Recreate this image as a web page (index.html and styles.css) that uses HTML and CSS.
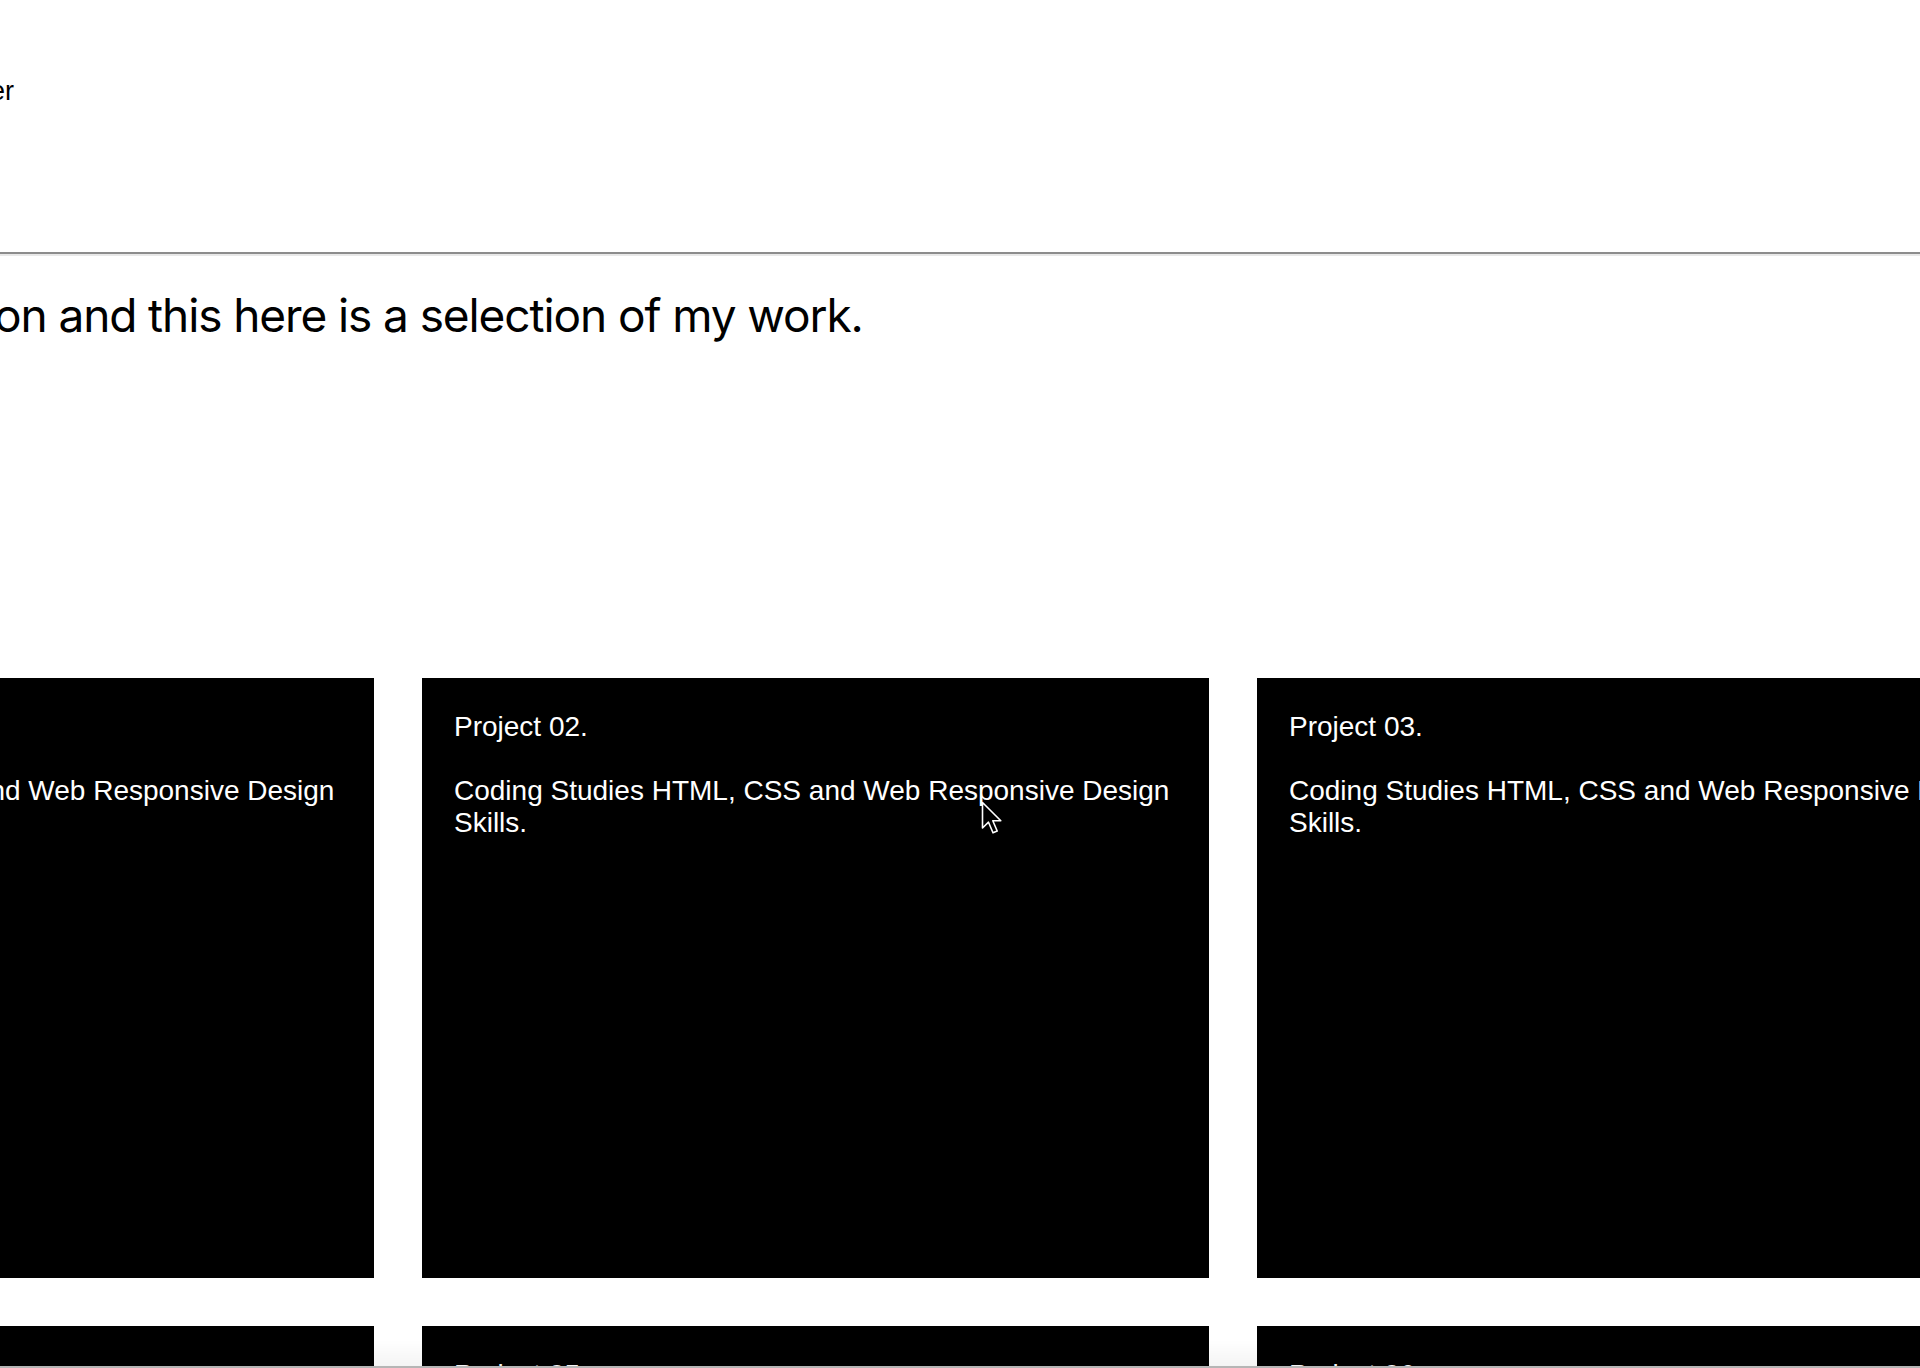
FILE: index.html
```html
<!DOCTYPE html>
<html lang="en">
<head>
<meta charset="utf-8">
<title>Portfolio</title>
<link rel="stylesheet" href="styles.css">
</head>
<body>
<header class="site-header">
  <nav class="nav"><span class="nav-item">er</span></nav>
</header>
<hr class="divider">
<section class="intro">
  <h1 class="intro-text">on and this here is a selection of my work.</h1>
</section>
<main class="projects">
  <article class="card"><h2 class="card-title">Project 01.</h2><p class="card-text">Coding Studies HTML, CSS and Web Responsive Design Skills.</p></article>
  <article class="card"><h2 class="card-title">Project 02.</h2><p class="card-text">Coding Studies HTML, CSS and Web Responsive Design Skills.</p></article>
  <article class="card"><h2 class="card-title">Project 03.</h2><p class="card-text">Coding Studies HTML, CSS and Web Responsive Design Skills.</p></article>
  <article class="card"><h2 class="card-title">Project 04.</h2><p class="card-text">Coding Studies HTML, CSS and Web Responsive Design Skills.</p></article>
  <article class="card"><h2 class="card-title">Project 05.</h2><p class="card-text">Coding Studies HTML, CSS and Web Responsive Design Skills.</p></article>
  <article class="card"><h2 class="card-title">Project 06.</h2><p class="card-text">Coding Studies HTML, CSS and Web Responsive Design Skills.</p></article>
</main>
<div class="scroll-track"></div>
<svg class="cursor" width="22" height="34" viewBox="0 0 22 34" aria-hidden="true">
  <path d="M1.5 1.5 V27 L7.5 21.2 L12 31.8 L16.2 30 L11.8 19.8 H19.8 Z" fill="#000" stroke="#fff" stroke-width="1.6" stroke-linejoin="round"/>
</svg>
</body>
</html>
```
FILE: styles.css
```css
html, body {
  margin: 0;
  padding: 0;
  background: #fff;
  overflow: hidden;
}
body {
  width: 1920px;
  height: 1368px;
  font-family: "Liberation Sans", Arial, sans-serif;
  color: #000;
}
.site-header {
  height: 252px;
  box-sizing: border-box;
  padding-top: 76px;
}
.nav {
  display: flex;
  margin-left: -10px;
}
.nav-item {
  font-size: 27px;
  line-height: 30px;
}
.divider {
  margin: 0;
  height: 0;
  border: 0;
  border-top: 2px solid #8c8c8c;
  border-bottom: 2px solid #e8e8e8;
}
.intro {
  padding-top: 30px;
}
.intro-text {
  margin: 0;
  font-family: Inter, "Noto Sans", sans-serif;
  font-weight: 400;
  font-size: 46px;
  line-height: 58px;
  letter-spacing: -1.1px;
  text-indent: -6px;
  white-space: nowrap;
}
.projects {
  display: grid;
  grid-template-columns: repeat(3, 787px);
  gap: 48px;
  margin-top: 334px;
  margin-left: -413px;
}
.card {
  background: #000;
  color: #fff;
  height: 600px;
  box-sizing: border-box;
  padding: 33px 32px 32px;
  font-size: 28px;
  line-height: 32px;
}
.card-title {
  margin: 0 0 32px;
  font-size: 28px;
  font-weight: 400;
  line-height: 32px;
}
.card-text {
  margin: 0;
}
.scroll-track {
  position: fixed;
  left: 0;
  right: 0;
  bottom: 0;
  height: 28px;
  background: linear-gradient(rgba(0,0,0,0), rgba(0,0,0,0.045));
  border-bottom: 2px solid #b5b5b5;
  box-sizing: border-box;
  pointer-events: none;
}
.cursor {
  position: fixed;
  left: 981px;
  top: 801px;
}
```
